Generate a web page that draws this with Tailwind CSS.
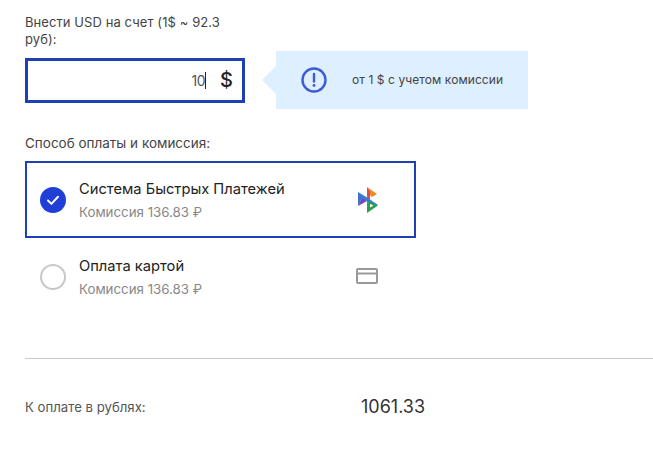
<!DOCTYPE html>
<html lang="ru">
<head>
  <meta charset="UTF-8">
  <title>Пополнение счета</title>
  <script src="https://cdn.jsdelivr.net/npm/@tailwindcss/browser@4"></script>
</head>
<body class="bg-white font-['Inter',sans-serif] text-[#333] overflow-hidden">
  <main class="w-[653px] h-[462px] pl-[25px] pt-[14px]">
    <!-- Amount -->
    <div class="w-[220px] text-[13px] leading-[17px] tracking-[0.08px] text-[#444]">Внести USD на счет (1$ ~ 92.3 руб):</div>
    <div class="flex items-center mt-[3px] h-[58px]">
      <div class="flex items-center justify-end w-[220px] h-[45px] border-[3px] border-[#1f3fb4] pr-[9px]">
        <span class="text-[14px] text-[#555] tracking-[-0.5px]">10</span>
        <span class="w-px h-[17px] bg-[#222]"></span>
        <span class="ml-[14px] text-[20px] font-medium leading-none text-[#222]">$</span>
      </div>
      <div class="ml-[17px] w-0 h-0 border-y-[14px] border-y-transparent border-r-[14px] border-r-[#deefff]"></div>
      <div class="flex items-center w-[252px] h-[58px] bg-[#deefff] pl-[25px]">
        <svg class="w-[26px] h-[26px]" viewBox="0 0 26 26" fill="none">
          <circle cx="13" cy="13" r="11.5" stroke="#3f5bd0" stroke-width="2.4"/>
          <path d="M13 7v7.5" stroke="#3f5bd0" stroke-width="2.4" stroke-linecap="round"/>
          <circle cx="13" cy="18.5" r="1.4" fill="#3f5bd0"/>
        </svg>
        <span class="ml-[25px] text-[12px] tracking-[0.08px] text-[#444]">от 1 $ с учетом комиссии</span>
      </div>
    </div>

    <!-- Payment method -->
    <div class="mt-[26px] text-[13.5px] leading-[17px] text-[#444]">Способ оплаты и комиссия:</div>
    <div class="mt-[9px] w-[391px]">
      <div class="flex items-center h-[77px] border-[2px] border-[#1f3fb4] pl-[13px]">
        <div class="flex items-center justify-center w-[26px] h-[26px] rounded-full bg-[#1f3fd8]">
          <svg class="w-[14px] h-[14px]" viewBox="0 0 14 14" fill="none">
            <path d="M2 7.5l3.4 3.4L12 3.8" stroke="#fff" stroke-width="2" stroke-linecap="round" stroke-linejoin="round"/>
          </svg>
        </div>
        <div class="ml-[13px] w-[278px] pt-[1px]">
          <div class="text-[14.7px] leading-[20px] text-[#222]">Система Быстрых Платежей</div>
          <div class="mt-[3px] text-[13.3px] leading-[20px] text-[#888]">Комиссия 136.83 ₽</div>
        </div>
        <svg class="w-[23px] h-[26px] mt-[1px]" viewBox="0 0 23 26">
          <path d="M10 0l10 7-5 3-2-2V4z" fill="#f08a24"/>
          <path d="M10 0l3 4v9l-3-2z" fill="#e5484d"/>
          <path d="M1 5l9 5.5L21 18l-5 0L1 9z" fill="#2f7fd8"/>
          <path d="M1 5l4 6.5L1 19z" fill="#3f6fd0"/>
          <path d="M1 19l4-8 5 3z" fill="#7a45b8"/>
          <path d="M10 14l11 4.5L10 26z" fill="#2e9e4f"/>
          <path d="M13 17l3.5 1.5L13 20.5z" fill="#fff"/>
        </svg>
      </div>
      <div class="flex items-center h-[77px] pl-[15px]">
        <div class="w-[26px] h-[26px] rounded-full border-[2px] border-[#c8c8c8]"></div>
        <div class="ml-[13px] w-[278px] pt-[1px]">
          <div class="text-[14.7px] leading-[20px] text-[#222]">Оплата картой</div>
          <div class="mt-[3px] text-[13.3px] leading-[20px] text-[#888]">Комиссия 136.83 ₽</div>
        </div>
        <svg class="w-[22px] h-[16px] ml-[-1px] mb-[2px]" viewBox="0 0 22 16" fill="none">
          <rect x="1" y="1" width="20" height="14" rx="1" stroke="#999" stroke-width="2"/>
          <path d="M1 5.5h20" stroke="#999" stroke-width="2"/>
        </svg>
      </div>
    </div>

    <!-- Total -->
    <div class="mt-[43px] border-t border-[#c9c9c9] flex items-center pt-[38px]">
      <span class="w-[336px] text-[13.2px] leading-[20px] text-[#555]">К оплате в рублях:</span>
      <span class="text-[18px] leading-[20px] text-[#333]">1061.33</span>
    </div>
  </main>
</body>
</html>
